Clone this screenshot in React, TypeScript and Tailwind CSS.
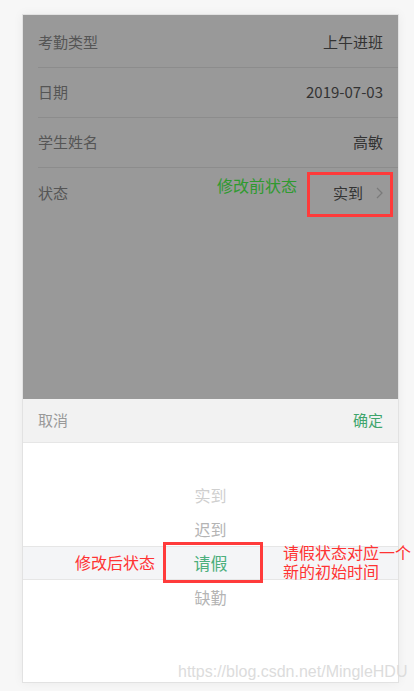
import React from "react";

const font = { fontFamily: '"Noto Sans CJK SC", "Noto Sans", sans-serif' };

const rows = [
  { label: "考勤类型", value: "上午进班" },
  { label: "日期", value: "2019-07-03" },
  { label: "学生姓名", value: "高敏" },
];

const options = ["", "实到", "迟到", "请假", "缺勤", "", ""];

const Chevron = () => (
  <svg width="7" height="12" viewBox="0 0 7 12" className="ml-[13px]">
    <polyline points="1,1 6,6 1,11" fill="none" stroke="#7a7a7a" strokeWidth="1.2" />
  </svg>
);

const App = () => {
  return (
    <div className="w-[414px] h-[691px] bg-[#f7f7f7] pt-[14px] pl-[22px] overflow-hidden" style={font}>
      <div className="relative w-[377px] h-[669px] border border-[#e2e2e2] bg-white flex flex-col shadow-[0_0_10px_rgba(0,0,0,0.05)]">
        {/* dimmed form */}
        <div className="h-[384px] bg-[#999999] pt-[3px]">
          {rows.map((r) => (
            <div key={r.label} className="h-[50px] ml-[15px] pr-[15px] flex items-center justify-between border-b border-[#8c8c8c] text-[15px]">
              <span className="text-[#555555]">{r.label}</span>
              <span className="text-[#333333]">{r.value}</span>
            </div>
          ))}
          <div className="h-[50px] ml-[15px] pr-[15px] flex items-center justify-between text-[15px]">
            <span className="text-[#555555]">状态</span>
            <span className="flex items-center text-[#333333]">
              实到
              <Chevron />
            </span>
          </div>
        </div>

        {/* picker */}
        <div className="h-[44px] bg-[#f2f2f2] border-b border-[#e6e6e6] flex items-center justify-between px-[15px] text-[15px]">
          <span className="text-[#999999]">取消</span>
          <span className="text-[#3fa56c]">确定</span>
        </div>
        <div className="flex-1 pt-[1px]">
          {options.map((o, i) =>
            i === 3 ? (
              <div key={i} className="h-[34px] flex items-center justify-center bg-[#f4f5f7] border-y border-[#e6e6e6] text-[17px] text-[#4caf7d]">
                {o}
              </div>
            ) : (
              <div
                key={i}
                className={
                  "h-[34px] flex items-center justify-center text-[16px] " +
                  (i === 1 ? "text-[#cfcfcf]" : "text-[#b4b4b4]")
                }
              >
                {o}
              </div>
            )
          )}
        </div>

        {/* annotations */}
        <div className="absolute left-[194px] top-[159px] text-[16px] leading-[22px] text-[#2f9a2f] whitespace-nowrap">修改前状态</div>
        <div className="absolute left-[284px] top-[157px] w-[86px] h-[45px] border-[3px] border-[#ff3b3b]" />
        <div className="absolute left-[52px] top-[536px] text-[16px] leading-[22px] text-[#ff3333] whitespace-nowrap">修改后状态</div>
        <div className="absolute left-[140px] top-[527px] w-[100px] h-[41px] border-[3px] border-[#ff3b3b]" />
        <div className="absolute left-[260px] top-[528px] text-[16px] leading-[19px] text-[#ff3333] whitespace-nowrap">
          请假状态对应一个
          <br />
          新的初始时间
        </div>
        <div
          className="absolute left-[155px] top-[646px] text-[16px] leading-[22px] text-[#dcdcdc] whitespace-nowrap"
          style={{ fontFamily: '"Liberation Sans", Arial, sans-serif' }}
        >
          https://blog.csdn.net/MingleHDU
        </div>
      </div>
    </div>
  );
};

export default App;
